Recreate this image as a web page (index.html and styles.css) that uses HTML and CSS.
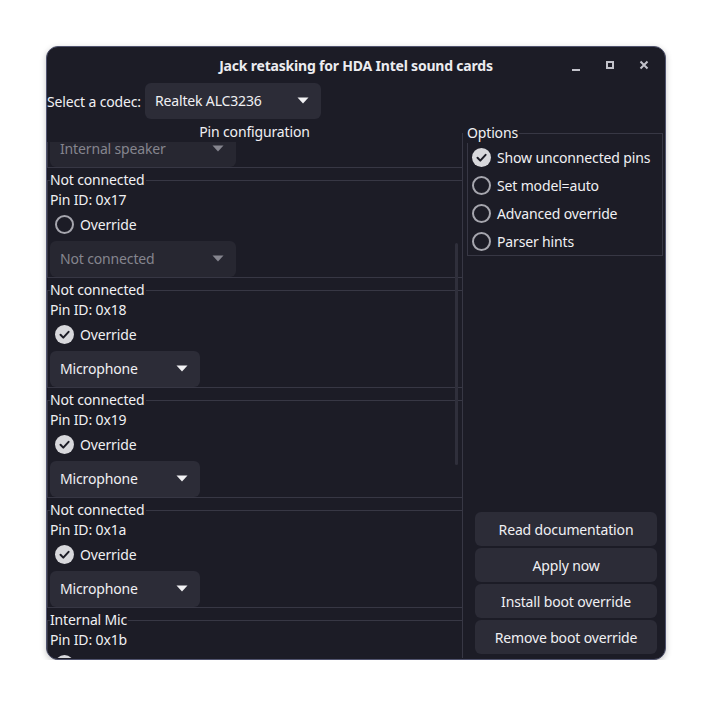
FILE: index.html
```html
<!DOCTYPE html>
<html lang="en">
<head>
<meta charset="utf-8">
<title>Jack retasking for HDA Intel sound cards</title>
<link rel="stylesheet" href="styles.css">
</head>
<body>
<div class="window">
  <header class="titlebar">
    <div class="title">Jack retasking for HDA Intel sound cards</div>
    <div class="controls">
      <span class="ctl"><svg width="16" height="16" viewBox="0 0 16 16"><rect x="4" y="12" width="8" height="2" fill="#c2c2ca"/></svg></span>
      <span class="ctl"><svg width="16" height="16" viewBox="0 0 16 16"><rect x="5" y="5" width="6" height="6" fill="none" stroke="#c2c2ca" stroke-width="2"/></svg></span>
      <span class="ctl"><svg width="16" height="16" viewBox="0 0 16 16"><path d="M4.5 4.5 L11.5 11.5 M11.5 4.5 L4.5 11.5" stroke="#c2c2ca" stroke-width="2" fill="none"/></svg></span>
    </div>
  </header>

  <div class="codec-row">
    <span class="codec-label">Select a codec:</span>
    <div class="dropdown w-codec"><span>Realtek ALC3236</span><svg class="arrow" width="12" height="7" viewBox="0 0 12 7"><path d="M0.5 0.5 H11.5 L6 6.5 Z" fill="#f2f2f4"/></svg></div>
  </div>

  <div class="main">
    <section class="pins">
      <div class="pane-title">Pin configuration</div>
      <div class="viewport">
        <div class="pin-tail">
          <div class="dropdown disabled w-wide"><span>Internal speaker</span><svg class="arrow" width="12" height="7" viewBox="0 0 12 7"><path d="M0.5 0.5 H11.5 L6 6.5 Z" fill="#85858e"/></svg></div>
        </div>

        <div class="pin">
          <div class="pin-title">Not connected</div>
          <div class="pin-id">Pin ID: 0x17</div>
          <div class="check-row"><span class="check"></span><span>Override</span></div>
          <div class="dropdown disabled w-wide"><span>Not connected</span><svg class="arrow" width="12" height="7" viewBox="0 0 12 7"><path d="M0.5 0.5 H11.5 L6 6.5 Z" fill="#85858e"/></svg></div>
        </div>

        <div class="pin">
          <div class="pin-title">Not connected</div>
          <div class="pin-id">Pin ID: 0x18</div>
          <div class="check-row"><span class="check on"><svg width="19" height="19" viewBox="0 0 19 19"><path d="M5.5 9.8 L8.3 12.6 L13.6 6.8" fill="none" stroke="#1c1c26" stroke-width="2" stroke-linecap="round" stroke-linejoin="round"/></svg></span><span>Override</span></div>
          <div class="dropdown w-mic"><span>Microphone</span><svg class="arrow" width="12" height="7" viewBox="0 0 12 7"><path d="M0.5 0.5 H11.5 L6 6.5 Z" fill="#f2f2f4"/></svg></div>
        </div>

        <div class="pin">
          <div class="pin-title">Not connected</div>
          <div class="pin-id">Pin ID: 0x19</div>
          <div class="check-row"><span class="check on"><svg width="19" height="19" viewBox="0 0 19 19"><path d="M5.5 9.8 L8.3 12.6 L13.6 6.8" fill="none" stroke="#1c1c26" stroke-width="2" stroke-linecap="round" stroke-linejoin="round"/></svg></span><span>Override</span></div>
          <div class="dropdown w-mic"><span>Microphone</span><svg class="arrow" width="12" height="7" viewBox="0 0 12 7"><path d="M0.5 0.5 H11.5 L6 6.5 Z" fill="#f2f2f4"/></svg></div>
        </div>

        <div class="pin">
          <div class="pin-title">Not connected</div>
          <div class="pin-id">Pin ID: 0x1a</div>
          <div class="check-row"><span class="check on"><svg width="19" height="19" viewBox="0 0 19 19"><path d="M5.5 9.8 L8.3 12.6 L13.6 6.8" fill="none" stroke="#1c1c26" stroke-width="2" stroke-linecap="round" stroke-linejoin="round"/></svg></span><span>Override</span></div>
          <div class="dropdown w-mic"><span>Microphone</span><svg class="arrow" width="12" height="7" viewBox="0 0 12 7"><path d="M0.5 0.5 H11.5 L6 6.5 Z" fill="#f2f2f4"/></svg></div>
        </div>

        <div class="pin">
          <div class="pin-title">Internal Mic</div>
          <div class="pin-id">Pin ID: 0x1b</div>
          <div class="check-row"><span class="check on"></span></div>
        </div>

        <div class="scroll-thumb"></div>
      </div>
    </section>

    <aside class="side">
      <div class="options">
        <div class="options-title">Options</div>
        <div class="opt-row"><span class="check on"><svg width="19" height="19" viewBox="0 0 19 19"><path d="M5.5 9.8 L8.3 12.6 L13.6 6.8" fill="none" stroke="#1c1c26" stroke-width="2" stroke-linecap="round" stroke-linejoin="round"/></svg></span><span>Show unconnected pins</span></div>
        <div class="opt-row"><span class="check"></span><span>Set model=auto</span></div>
        <div class="opt-row"><span class="check"></span><span>Advanced override</span></div>
        <div class="opt-row"><span class="check"></span><span>Parser hints</span></div>
      </div>
      <div class="actions">
        <button class="btn">Read documentation</button>
        <button class="btn">Apply now</button>
        <button class="btn">Install boot override</button>
        <button class="btn">Remove boot override</button>
      </div>
    </aside>
  </div>
</div>
</body>
</html>
```

FILE: styles.css
```css
* { box-sizing: border-box; }

html, body {
  margin: 0;
  padding: 0;
  background: #ffffff;
}

body {
  padding: 46px 0 0 46px;
  font-family: "Noto Sans", "DejaVu Sans", sans-serif;
  font-size: 14px;
  letter-spacing: -0.15px;
  color: #f0f0f3;
}

.window {
  width: 620px;
  height: 614px;
  background: #1c1c26;
  border: 1px solid #50536e;
  border-radius: 12px;
  box-shadow: 0 2px 6px rgba(0, 0, 0, 0.22);
  display: flex;
  flex-direction: column;
  overflow: hidden;
}

.titlebar {
  height: 36px;
  flex: none;
  display: grid;
  grid-template-columns: 1fr auto 1fr;
  align-items: center;
}

.title {
  grid-column: 2;
  font-weight: 700;
  font-size: 14px;
  letter-spacing: -0.2px;
  color: #ececf0;
}

.controls {
  grid-column: 3;
  justify-self: end;
  display: flex;
  gap: 10px;
  padding-right: 9px;
}

.ctl {
  width: 24px;
  height: 24px;
  display: flex;
  align-items: center;
  justify-content: center;
}

.codec-row {
  height: 36px;
  flex: none;
  display: flex;
  align-items: center;
  gap: 4px;
}

.dropdown {
  height: 36px;
  flex: none;
  background: #2c2c37;
  border-radius: 6px;
  display: flex;
  align-items: center;
  justify-content: space-between;
  padding: 0 12px 1px 10px;
  color: #f0f0f3;
}

.dropdown.disabled {
  background: #272731;
  color: #85858e;
}

.arrow { flex: none; }

.w-codec { width: 176px; }
.w-wide { width: 186px; }
.w-mic { width: 150px; }

.main {
  flex: 1;
  min-height: 0;
  display: flex;
}

.pins {
  width: 416px;
  flex: none;
  margin-top: 14px;
  margin-bottom: 1px;
  border-right: 1px solid #373744;
  display: flex;
  flex-direction: column;
}

.pane-title {
  margin-top: -11px;
  line-height: 20px;
  text-align: center;
}

.viewport {
  flex: 1;
  min-height: 0;
  overflow: hidden;
  position: relative;
}

.pin-tail {
  height: 26px;
  overflow: hidden;
  display: flex;
  align-items: flex-end;
  border-left: 1px solid #373744;
  border-bottom: 1px solid #373744;
  padding-left: 2px;
}

.pin {
  margin-top: 12px;
  border: 1px solid #373744;
  border-right: none;
  padding-left: 2px;
}

.pin-title {
  display: block;
  width: fit-content;
  margin-top: -11px;
  line-height: 20px;
  background: #1c1c26;
  padding-right: 1px;
}

.pin-id {
  line-height: 20px;
}

.check-row {
  margin-top: 2px;
  height: 24px;
  display: flex;
  align-items: center;
  gap: 6px;
  padding-left: 5px;
}

.check {
  width: 19px;
  height: 19px;
  flex: none;
  border-radius: 50%;
  border: 2px solid #a6a6ae;
  display: block;
}

.check.on {
  border: none;
  background: #d8d8dc;
}

.check svg { display: block; }

.pin .dropdown {
  margin-top: 5px;
}

.scroll-thumb {
  position: absolute;
  right: 4px;
  top: 101px;
  width: 3px;
  height: 222px;
  border-radius: 2px;
  background: #2f2f3b;
}

.side {
  width: 196px;
  flex: none;
  margin-left: 4px;
  display: flex;
  flex-direction: column;
  justify-content: space-between;
}

.options {
  margin-top: 14px;
  border: 1px solid #373744;
}

.options-title {
  display: block;
  width: fit-content;
  margin-top: -11px;
  margin-left: -1px;
  line-height: 20px;
  background: #1c1c26;
  padding-right: 1px;
}

.opt-row {
  height: 28px;
  display: flex;
  align-items: center;
  gap: 6px;
  padding-left: 4px;
}

.actions {
  display: flex;
  flex-direction: column;
  gap: 2px;
  padding: 0 6px 5px 8px;
}

.btn {
  height: 34px;
  border: none;
  border-radius: 6px;
  background: #2c2c37;
  color: #f0f0f3;
  font-family: "Noto Sans", "DejaVu Sans", sans-serif;
  font-size: 14px;
  letter-spacing: -0.15px;
  padding: 0;
}
```
